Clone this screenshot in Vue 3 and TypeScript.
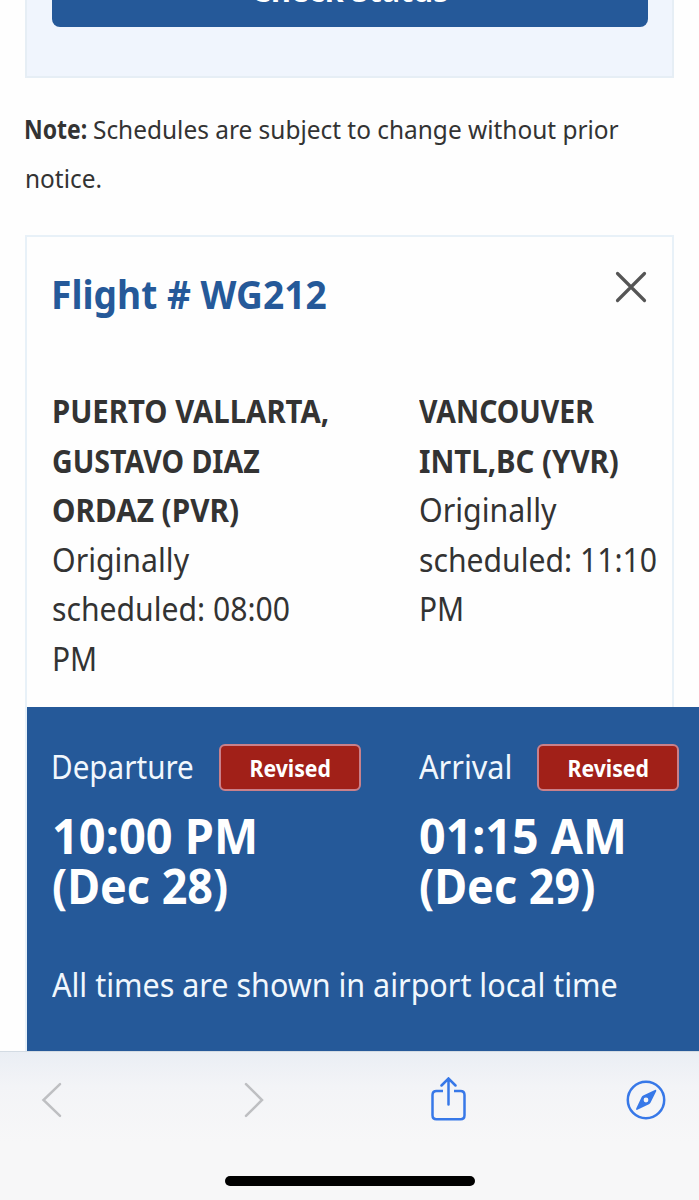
<script setup lang="ts">
interface Line {
  text: string
  fit: number
  bold?: boolean
}
interface Stop {
  kind: string
  status: string
  lines: Line[]
  labelFit: number
  time: Line[]
}

// Horizontal condensation of the type, per line of text
const squeeze = (fit: number) => ({ transform: `scaleX(${fit})` })

const stops: Stop[] = [
  {
    kind: 'Departure',
    status: 'Revised',
    labelFit: 0.912,
    lines: [
      { text: 'PUERTO VALLARTA,', fit: 0.902, bold: true },
      { text: 'GUSTAVO DIAZ', fit: 0.879, bold: true },
      { text: 'ORDAZ (PVR)', fit: 0.914, bold: true },
      { text: 'Originally', fit: 0.931 },
      { text: 'scheduled: 08:00', fit: 0.928 },
      { text: 'PM', fit: 0.92 },
    ],
    time: [
      { text: '10:00 PM', fit: 0.978 },
      { text: '(Dec 28)', fit: 0.935 },
    ],
  },
  {
    kind: 'Arrival',
    status: 'Revised',
    labelFit: 0.943,
    lines: [
      { text: 'VANCOUVER', fit: 0.875, bold: true },
      { text: 'INTL,BC (YVR)', fit: 0.904, bold: true },
      { text: 'Originally', fit: 0.934 },
      { text: 'scheduled: 11:10', fit: 0.928 },
      { text: 'PM', fit: 0.92 },
    ],
    time: [
      { text: '01:15 AM', fit: 0.97 },
      { text: '(Dec 29)', fit: 0.936 },
    ],
  },
]
</script>

<template>
  <div class="screen">
    <main class="page">
      <section class="search">
        <button class="check"><span :style="squeeze(0.94)">Check Status</span></button>
      </section>

      <p class="note">
        <span class="note-row">
          <strong><span class="t" :style="squeeze(0.885)">Note:</span></strong>
          <span class="t" :style="squeeze(0.939)">Schedules are subject to change without prior</span>
        </span>
        <span class="note-row"><span class="t" :style="squeeze(0.938)">notice.</span></span>
      </p>

      <section class="card">
        <header class="card-head">
          <h2 class="t" :style="squeeze(0.928)">Flight # WG212</h2>
          <svg class="close" width="32" height="32" viewBox="0 0 32 32">
            <path d="M2.5 2.5 29.5 29.5M29.5 2.5 2.5 29.5" />
          </svg>
        </header>

        <div class="cols places">
          <div v-for="s in stops" :key="s.kind">
            <div v-for="l in s.lines" :key="l.text" class="line" :class="{ bold: l.bold }">
              <span class="t" :style="squeeze(l.fit)">{{ l.text }}</span>
            </div>
          </div>
        </div>

        <div class="panel">
          <div class="cols">
            <div v-for="s in stops" :key="s.kind">
              <div class="label" :class="s.kind.toLowerCase()">
                <span class="t" :style="squeeze(s.labelFit)">{{ s.kind }}</span>
                <span class="badge"><span :style="squeeze(0.9)">{{ s.status }}</span></span>
              </div>
              <div class="time">
                <div v-for="l in s.time" :key="l.text">
                  <span class="t" :style="squeeze(l.fit)">{{ l.text }}</span>
                </div>
              </div>
            </div>
          </div>
          <p class="local"><span class="t" :style="squeeze(0.938)">All times are shown in airport local time</span></p>
        </div>
      </section>
    </main>

    <footer class="toolbar">
      <nav class="tools">
        <svg class="arrow" width="22" height="36" viewBox="0 0 22 36"><path d="M19 2.2 2.5 18 19 33.8" /></svg>
        <svg class="arrow forward" width="22" height="36" viewBox="0 0 22 36"><path d="M3 2.2 19 18 3 33.8" /></svg>
        <svg class="tool share" width="36" height="44" viewBox="0 0 36 44">
          <path d="M13 14H6.5Q2.5 14 2.5 18V38.3Q2.5 42.3 6.5 42.3H30.5Q34.5 42.3 34.5 38.3V18Q34.5 14 30.5 14H24" />
          <path class="round" d="M18.5 27.5V2M11.5 8.5 18.5 1.5 25.5 8.5" />
        </svg>
        <svg class="tool compass" width="40" height="40" viewBox="0 0 40 40">
          <circle cx="20" cy="20" r="18.2" />
          <path
            class="needle"
            fill-rule="evenodd"
            d="M28.9 10 17.2 15.6Q16 16.2 15.4 17.4L10.2 28.5Q9.6 30.4 11.4 29.8L22.9 24.2Q24 23.6 24.6 22.4L30.2 11.2Q30.6 9.3 28.9 10ZM20 17.6A2.4 2.4 0 1 1 20 22.4A2.4 2.4 0 1 1 20 17.6Z"
          />
        </svg>
      </nav>
      <div class="home"></div>
    </footer>
  </div>
</template>

<style>
body {
  margin: 0;
  background: #fff;
}
</style>

<style scoped>
.screen {
  width: 699px;
  height: 1200px;
  overflow: hidden;
  display: flex;
  flex-direction: column;
  background: #fefefe;
  color: #333;
  font-family: "Noto Sans", "Open Sans", sans-serif;
}
.t {
  display: inline-block;
  white-space: nowrap;
  transform-origin: 0 50%;
}
.page {
  height: 1051px;
  overflow: hidden;
  padding: 0 25px;
  flex: none;
}
.search {
  box-sizing: border-box;
  width: 649px;
  height: 158px;
  margin-top: -80px;
  border: 2px solid #e6eef5;
  background: #f0f5fd;
  padding: 0 25px 49px;
  display: flex;
  align-items: flex-end;
}
.check {
  width: 596px;
  height: 75px;
  flex: none;
  border: 0;
  border-radius: 8px;
  background: #255999;
  color: #fff;
  font: 700 32.5px/50px "Noto Sans", sans-serif;
  padding: 0;
}
.check span,
.badge span {
  display: inline-block;
}
.note {
  margin: 26.5px 0 0;
  font-size: 26px;
  line-height: 49.5px;
}
.note-row {
  display: flex;
  height: 49.5px;
}
.note-row strong {
  width: 68px;
  margin-left: -1px;
  margin-right: 1px;
  flex: none;
}
.note-row + .note-row {
  margin-left: -0.5px;
}
.card {
  box-sizing: border-box;
  width: 649px;
  height: 860px;
  margin-top: 31.5px;
  border: 2px solid #e8f1f8;
}
.card-head {
  display: flex;
  justify-content: space-between;
  align-items: flex-start;
  padding: 32px 25px 0 24px;
  height: 117px;
}
.card-head h2 {
  margin: 0;
  font-size: 40px;
  line-height: 50px;
  color: #255999;
}
.close {
  margin-top: 2px;
  fill: none;
  stroke: #555;
  stroke-width: 3.2;
  stroke-linecap: round;
}
.cols {
  display: grid;
  grid-template-columns: 367px 280px;
  padding-left: 25px;
}
.places {
  height: 321px;
  font-size: 32.5px;
}
.line {
  height: 49.5px;
  line-height: 49.5px;
}
.bold {
  font-weight: 700;
}
.panel {
  width: 672px;
  height: 400px;
  padding-top: 32px;
  background: #255999;
  color: #fff;
}
.label {
  display: flex;
  align-items: center;
  height: 57px;
  font-size: 32.5px;
}
.label > .t {
  flex: none;
  line-height: 50px;
  margin-top: -2px;
  color: #f1f7fd;
}
.departure > .t {
  width: 168px;
  margin-left: -1px;
}
.arrival > .t {
  width: 118px;
}
.badge {
  box-sizing: border-box;
  width: 142px;
  height: 47px;
  border: 2px solid #c9808a;
  border-radius: 6px;
  background: #a12018;
  font-size: 23.6px;
  line-height: 44px;
  font-weight: 700;
  text-align: center;
}
.time {
  margin-top: 15px;
  font-size: 48px;
  line-height: 50px;
  font-weight: 700;
}
.local {
  margin: 49px 0 0 25px;
  font-size: 32.5px;
  line-height: 50px;
  color: #f1f7fd;
}
.toolbar {
  box-sizing: border-box;
  height: 149px;
  flex: none;
  border-top: 1px solid #d3dbe3;
  background: linear-gradient(#eaeef4, #f3f4f7 35px, #f7f7f8 90px);
  display: flex;
  flex-direction: column;
  align-items: center;
}
.tools {
  box-sizing: border-box;
  width: 100%;
  height: 96px;
  padding: 0 0 1px 41px;
  display: flex;
  align-items: center;
}
.arrow {
  fill: none;
  stroke: #bebfc2;
  stroke-width: 2.5;
  stroke-linecap: round;
  stroke-linejoin: miter;
}
.forward {
  margin-left: 180px;
}
.tool {
  fill: none;
  stroke: #3778e8;
  stroke-width: 2.5;
}
.share {
  margin: 0 160px 2px 164.5px;
}
.round {
  stroke-linecap: round;
}
.needle {
  fill: #3778e8;
  stroke: none;
}
.home {
  width: 250px;
  height: 10px;
  margin-top: 28px;
  border-radius: 5px;
  background: #000;
}
</style>
